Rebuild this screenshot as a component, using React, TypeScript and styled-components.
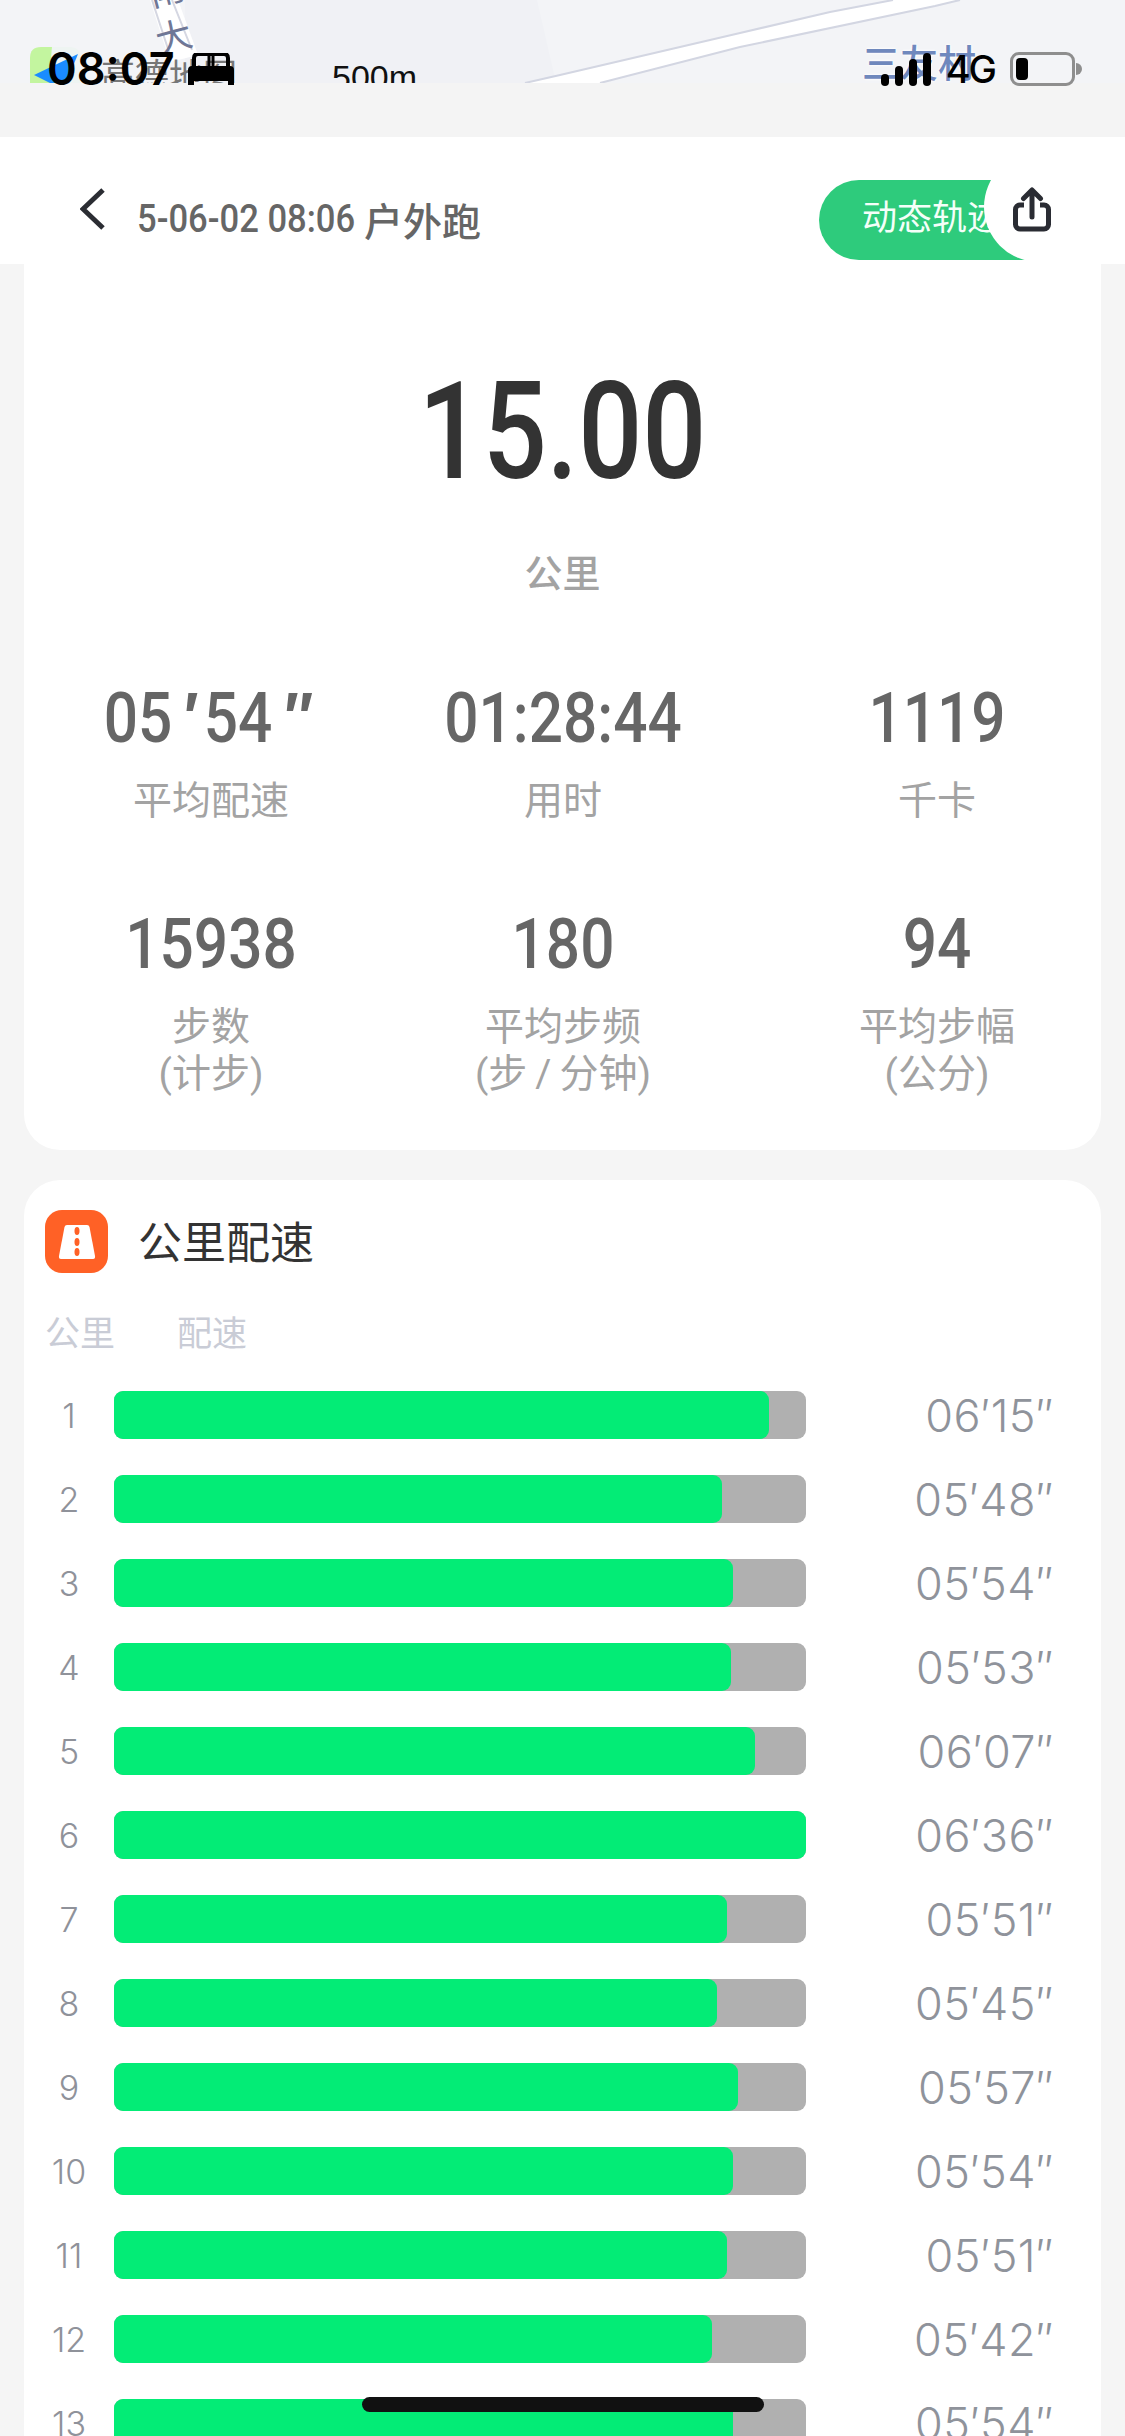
import styled, { createGlobalStyle } from 'styled-components';

const splits = [
    { km: 1, pace: "06′15″", seconds: 375 },
    { km: 2, pace: "05′48″", seconds: 348 },
    { km: 3, pace: "05′54″", seconds: 354 },
    { km: 4, pace: "05′53″", seconds: 353 },
    { km: 5, pace: "06′07″", seconds: 367 },
    { km: 6, pace: "06′36″", seconds: 396 },
    { km: 7, pace: "05′51″", seconds: 351 },
    { km: 8, pace: "05′45″", seconds: 345 },
    { km: 9, pace: "05′57″", seconds: 357 },
    { km: 10, pace: "05′54″", seconds: 354 },
    { km: 11, pace: "05′51″", seconds: 351 },
    { km: 12, pace: "05′42″", seconds: 342 },
    { km: 13, pace: "05′54″", seconds: 354 },
];

const stats = [
    { value: "05′54″", label: ["平均配速"] },
    { value: "01:28:44", label: ["用时"] },
    { value: "1119", label: ["千卡"] },
    { value: "15938", label: ["步数", "(计步)"] },
    { value: "180", label: ["平均步频", "(步\u2009/\u2009分钟)"] },
    { value: "94", label: ["平均步幅", "(公分)"] },
];

const slowest = 396;

function App() {
    return (
        <>
            <GlobalStyle />
            <Page>
                <MapStrip>
                    <MapDrawing viewBox="0 0 1125 83" width="1125" height="83">
                        <path d="M185 0 H537 L556 83 H185 Z" fill="#f0f1f5" />
                        <path d="M150 0 L178 0 L198 55 L170 62 Z" fill="#ffffff" />
                        <path d="M152 0 L171 58 M172 0 L192 50" stroke="#d5d7e2" strokeWidth="2" fill="none" />
                        <path d="M525 83 L560 75 L740 33 L830 12 L893 0 H960 L935 6 L740 47 L600 83 Z" fill="#ffffff" />
                        <path d="M525 83 L560 75 L740 33 L830 12 L893 0 M960 0 L935 6 L740 47 L600 83" stroke="#d3d6e2" strokeWidth="2" fill="none" />
                        <path d="M30 83 V58 Q30 47 41 47 H52 L50 83 Z" fill="#c3f59f" />
                        <path d="M52 47 H70 Q80 47 80 58 V83 H50 Z" fill="#eef4f2" />
                        <path d="M34 75 L78 54 L66 83 H50 Z" fill="#1a8cff" />
                    </MapDrawing>
                    <RoadName $left={148} $top={-27} $rotate={-15}>南</RoadName>
                    <RoadName $left={156} $top={20} $rotate={-15}>大</RoadName>
                    <MapBrand>高德地图</MapBrand>
                    <MapScale>500m</MapScale>
                    <VillageName>三友村</VillageName>
                </MapStrip>
                <StatusBar>
                    <StatusLeft>
                        <Clock>08:07</Clock>
                        <svg width="46" height="32" viewBox="0 0 46 32">
                            <path d="M6 14 V5 Q6 1 10 1 H36 Q40 1 40 5 V14" fill="none" stroke="#000" strokeWidth="4" />
                            <path d="M21 3 V14 M25 3 V14" stroke="#000" strokeWidth="3" />
                            <path d="M4 13 H42 Q46 13 46 17 V32 H40 V28 H6 V32 H0 V17 Q0 13 4 13 Z" fill="#000" />
                        </svg>
                    </StatusLeft>
                    <StatusRight>
                        <Signal>
                            <SignalBar $height={12} />
                            <SignalBar $height={20} />
                            <SignalBar $height={27} />
                            <SignalBar $height={33} />
                        </Signal>
                        <Network>4G</Network>
                        <Battery>
                            <BatteryLevel />
                        </Battery>
                    </StatusRight>
                </StatusBar>
                <GreyGap />
                <Header>
                    <BackIcon width="25" height="42" viewBox="0 0 25 42">
                        <path d="M23 2 L3 21 L23 40" fill="none" stroke="#2b2d33" strokeWidth="5" />
                    </BackIcon>
                    <Title>
                        <TitleDate>5-06-02 08:06</TitleDate>
                        <span>户外跑</span>
                    </Title>
                    <TrackButton>动态轨迹</TrackButton>
                    <ShareButton>
                        <svg width="38" height="45" viewBox="0 0 38 45">
                            <path d="M11 18 H7 a4.500 4.500 0 0 0 -4.500 4.500 V37.500 a4.500 4.500 0 0 0 4.500 4.500 H31 a4.500 4.500 0 0 0 4.500 -4.500 V22.500 a4.500 4.500 0 0 0 -4.500 -4.500 H27" fill="none" stroke="#2a2c33" strokeWidth="5" />
                            <path d="M19 30 V4 M10.500 11.500 L19 3 L27.500 11.500" fill="none" stroke="#2a2c33" strokeWidth="5" strokeLinecap="round" strokeLinejoin="round" />
                        </svg>
                    </ShareButton>
                </Header>
                <SummaryCard>
                    <Distance>
                        <DistanceValue>15.00</DistanceValue>
                    </Distance>
                    <DistanceUnit>公里</DistanceUnit>
                    <StatsGrid>
                        {stats.map((stat) => (
                            <Stat key={stat.label[0]}>
                                <StatValue>
                                    {stat.value.split(/([′″])/).map((part, i) =>
                                        i % 2 === 1 ? <Prime key={i}>{part}</Prime> : part
                                    )}
                                </StatValue>
                                <StatLabel>
                                    {stat.label.map((line) => (
                                        <div key={line}>{line}</div>
                                    ))}
                                </StatLabel>
                            </Stat>
                        ))}
                    </StatsGrid>
                </SummaryCard>
                <PaceCard>
                    <PaceHeading>
                        <svg width="63" height="63" viewBox="0 0 63 63">
                            <rect width="63" height="63" rx="17" fill="#ff6126" />
                            <path d="M22 15 H42 Q44 15 44.500 17 L50 46 Q50.500 49 48 49 H16 Q13.500 49 14 46 L19.500 17 Q20 15 22 15 Z" fill="#ffffff" />
                            <ellipse cx="32" cy="21" rx="2.500" ry="4" fill="#ff6126" />
                            <ellipse cx="32" cy="32" rx="2.500" ry="4" fill="#ff6126" />
                            <ellipse cx="32" cy="42" rx="2.500" ry="4" fill="#ff6126" />
                        </svg>
                        <PaceTitle>公里配速</PaceTitle>
                    </PaceHeading>
                    <Columns>
                        <span>公里</span>
                        <span>配速</span>
                    </Columns>
                    {splits.map((split) => (
                        <SplitRow key={split.km}>
                            <SplitNumber>{split.km}</SplitNumber>
                            <Track>
                                <Fill style={{ width: `${(split.seconds / slowest) * 100}%` }} />
                            </Track>
                            <SplitPace>{split.pace}</SplitPace>
                        </SplitRow>
                    ))}
                </PaceCard>
                <HomeIndicator />
            </Page>
        </>
    )
}

export default App;


const GlobalStyle = createGlobalStyle`
    html, body {
        margin: 0;
        padding: 0;
        background: #f5f5f5;
    }
    * {
        box-sizing: border-box;
    }
`;

const Page = styled.div`
    position: relative;
    width: 1125px;
    height: 2436px;
    overflow: hidden;
    background: #f5f5f5;
    font-family: Roboto, "Noto Sans CJK SC", sans-serif;
`;

const MapStrip = styled.div`
    position: relative;
    height: 83px;
    overflow: hidden;
    background: #f3f4f7;
`;

const MapDrawing = styled.svg`
    display: block;
`;

const RoadName = styled.span<{ $left: number; $top: number; $rotate: number }>`
    position: absolute;
    left: ${props => props.$left}px;
    top: ${props => props.$top}px;
    font-size: 36px;
    line-height: 36px;
    color: #6f7796;
    transform: rotate(${props => props.$rotate}deg);
`;

const MapBrand = styled.span`
    position: absolute;
    left: 101px;
    top: 56px;
    font-size: 34px;
    line-height: 40px;
    color: #777;
`;

const MapScale = styled.span`
    position: absolute;
    left: 332px;
    top: 59px;
    font-family: "Liberation Sans", sans-serif;
    font-size: 34px;
    line-height: 36px;
    color: #111;
`;

const VillageName = styled.span`
    position: absolute;
    left: 862px;
    top: 42px;
    font-size: 38px;
    font-weight: 500;
    line-height: 44px;
    color: #6f88bd;
    text-shadow: 0 0 3px #fff, 0 0 3px #fff;
`;

const StatusBar = styled.div`
    position: absolute;
    top: 46px;
    left: 47px;
    right: 50px;
    display: flex;
    justify-content: space-between;
    align-items: center;
    height: 46px;
`;

const StatusLeft = styled.div`
    display: flex;
    align-items: center;
    gap: 13px;
`;

const Clock = styled.span`
    font-family: Inter, sans-serif;
    font-size: 45px;
    font-weight: 600;
    line-height: 46px;
    color: #000;
`;

const StatusRight = styled.div`
    display: flex;
    align-items: center;
`;

const Signal = styled.div`
    display: flex;
    align-items: flex-end;
    gap: 6px;
    height: 33px;
    margin-right: 15px;
`;

const SignalBar = styled.span<{ $height: number }>`
    width: 8px;
    height: ${props => props.$height}px;
    border-radius: 4px;
    background: #000;
`;

const Network = styled.span`
    font-family: Inter, sans-serif;
    font-size: 38px;
    font-weight: 500;
    line-height: 46px;
    letter-spacing: -2px;
    color: #000;
    margin-right: 15px;
`;

const Battery = styled.div`
    position: relative;
    width: 65px;
    height: 34px;
    border: 3px solid #8e8e8e;
    border-radius: 9px;
    padding: 3px;

    &::after {
        content: '';
        position: absolute;
        right: -10px;
        top: 8px;
        width: 6px;
        height: 12px;
        border-radius: 0 6px 6px 0;
        background: #8e8e8e;
    }
`;

const BatteryLevel = styled.div`
    width: 12px;
    height: 22px;
    border-radius: 4px;
    background: #000;
`;

const GreyGap = styled.div`
    height: 54px;
    background: #f4f4f4;
`;

const Header = styled.div`
    position: relative;
    display: flex;
    align-items: flex-start;
    height: 127px;
    padding-left: 80px;
    background: #fff;
`;

const BackIcon = styled.svg`
    flex: none;
    margin-top: 51px;
`;

const Title = styled.div`
    display: flex;
    align-items: center;
    height: 40px;
    margin-top: 62px;
    margin-left: 32px;
    font-size: 39px;
    font-weight: 500;
    color: #666;
`;

const TitleDate = styled.span`
    display: inline-block;
    margin-right: -19px;
    transform: scaleX(0.887);
    transform-origin: left center;
    white-space: nowrap;
`;

const TrackButton = styled.div`
    position: absolute;
    left: 819px;
    top: 43px;
    width: 215px;
    height: 80px;
    padding-left: 43px;
    border-radius: 40px 12px 12px 40px;
    background: #2ecb7c;
    color: #f4fff9;
    font-size: 35px;
    line-height: 78px;
    white-space: nowrap;
    overflow: hidden;
`;

const ShareButton = styled.div`
    position: absolute;
    left: 984px;
    top: 15px;
    width: 110px;
    height: 110px;
    border-radius: 50%;
    background: #fff;
    display: flex;
    justify-content: center;
    padding-top: 35px;
    padding-right: 15px;
`;

const SummaryCard = styled.div`
    height: 886px;
    margin: 0 24px;
    padding-top: 100px;
    border-radius: 0 0 36px 36px;
    background: #fff;
`;

const Distance = styled.div`
    text-align: center;
    height: 136px;
    line-height: 136px;
`;

const DistanceValue = styled.span`
    display: inline-block;
    font-size: 136px;
    font-weight: 500;
    color: #333;
    transform: scaleX(0.83);
`;

const DistanceUnit = styled.div`
    margin-top: 48px;
    text-align: center;
    font-size: 38px;
    font-weight: 500;
    line-height: 52px;
    color: #a3a3a3;
`;

const StatsGrid = styled.div`
    display: grid;
    grid-template-columns: 280px 424px 324px;
    grid-auto-rows: 226px;
    margin-top: 82px;
    padding-left: 47px;
`;

const Stat = styled.div`
    text-align: center;
`;

const StatValue = styled.div`
    font-size: 71px;
    font-weight: 500;
    line-height: 72px;
    color: #666;
    transform: scaleX(0.85);
    white-space: nowrap;
`;

const Prime = styled.span`
    font-family: "Liberation Sans", sans-serif;
    font-style: italic;
    font-weight: 700;
    margin: 0 10px;
`;

const StatLabel = styled.div`
    margin-top: 24px;
    font-size: 39px;
    line-height: 47px;
    color: #a3a3a3;
`;

const PaceCard = styled.div`
    height: 1300px;
    margin: 30px 24px 0;
    padding-top: 30px;
    border-radius: 36px 36px 0 0;
    background: #fff;
`;

const PaceHeading = styled.div`
    display: flex;
    align-items: flex-start;
    gap: 30px;
    height: 67px;
    padding-left: 21px;
`;

const PaceTitle = styled.div`
    padding-top: 3px;
    font-size: 44px;
    line-height: 63px;
    color: #333;
`;

const Columns = styled.div`
    display: flex;
    gap: 62px;
    height: 78px;
    padding: 34px 0 0 21px;
    font-size: 35px;
    line-height: 48px;
    color: #c9ccd6;
`;

const SplitRow = styled.div`
    display: flex;
    align-items: center;
    height: 48px;
    margin-top: 36px;
`;

const SplitNumber = styled.div`
    width: 90px;
    text-align: center;
    font-family: Inter, sans-serif;
    font-size: 34px;
    font-weight: 300;
    color: #8f929a;
`;

const Track = styled.div`
    width: 692px;
    height: 48px;
    border-radius: 9px;
    background: #b0b0b0;
`;

const Fill = styled.div`
    height: 100%;
    border-radius: 9px;
    background: #03ec76;
`;

const SplitPace = styled.div`
    flex: 1;
    padding-right: 47px;
    text-align: right;
    font-family: Inter, sans-serif;
    font-size: 45px;
    font-weight: 300;
    letter-spacing: 0.5px;
    color: #8f939b;
`;

const HomeIndicator = styled.div`
    position: absolute;
    left: 362px;
    top: 2397px;
    width: 402px;
    height: 15px;
    border-radius: 8px;
    background: #111;
`;
